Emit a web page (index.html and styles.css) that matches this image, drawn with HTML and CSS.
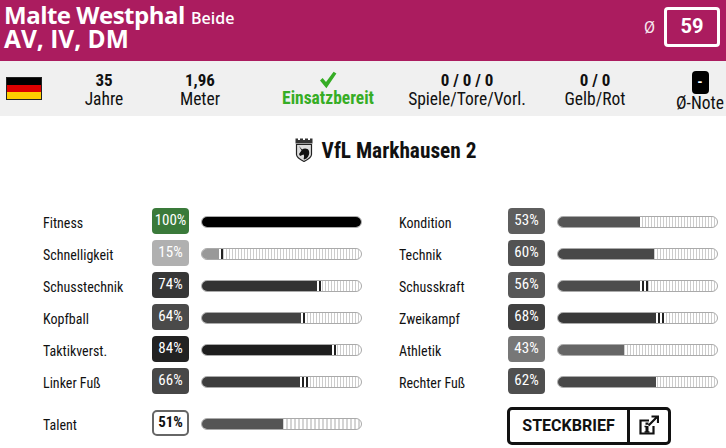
FILE: index.html
```html
<!DOCTYPE html>
<html lang="de">
<head>
    <meta charset="UTF-8">
    <title>Malte Westphal</title>
    <link rel="stylesheet" href="styles.css">
</head>
<body>
    <div class="head">
        <div class="headName">
            <div class="nameLine"><span class="nameTxt">Malte Westphal</span> <span class="foot">Beide</span></div>
            <div class="posLine">AV, IV, DM</div>
        </div>
        <div class="headScore">
            <span class="avgSign">Ø</span>
            <span class="scoreBox">59</span>
        </div>
    </div>

    <div class="stats">
        <div class="flag"><span class="flagB"></span><span class="flagR"></span><span class="flagG"></span></div>
        <div class="stat statAge"><b>35</b><span>Jahre</span></div>
        <div class="stat statSize"><b>1,96</b><span>Meter</span></div>
        <div class="stat statFit">
            <svg class="check" width="18" height="18" viewBox="0 0 18 18"><path d="M1 9.500 L3.600 7 L7 11 L14.600 0.800 L17.400 2.600 L7.400 17.200 Z" fill="#36ad25"/></svg>
            <span>Einsatzbereit</span>
        </div>
        <div class="stat statGames"><b>0 / 0 / 0</b><span>Spiele/Tore/Vorl.</span></div>
        <div class="stat statCards"><b>0 / 0</b><span>Gelb/Rot</span></div>
        <div class="stat statNote"><em class="noteBox">-</em><span>Ø-Note</span></div>
    </div>

    <div class="club">
        <svg class="crest" width="18" height="24" viewBox="0 0 18 24">
            <path d="M0.500 0.500h2.500v1.500h2v-1.500h3v1.500h2v-1.500h3v1.500h2v-1.500h2.500v5h-17z" fill="#333"/>
            <path d="M1.500 6.500h15v10c0 3-3.500 5-7.500 7c-4-2-7.500-4-7.500-7z" fill="#ddd" stroke="#222" stroke-width="1.200"/>
            <path d="M4 8l3 3.500c2-1.500 6-1.500 7 1.500c.7 2.500 0 5-2.500 7.500l-2.500 1c-1-1 1-3-.5-5l-3.500 1.500l-1-2l2.500-3.500z" fill="#111"/>
        </svg>
        <span>VfL Markhausen 2</span>
    </div>

    <div class="skills">
        <div class="skillCol">
            <div class="row"><span class="lbl">Fitness</span><span class="val" style="background:#3a7a3a">100%</span><div class="bar"><span class="fill" style="width:100%;background:#000"></span></div></div>
            <div class="row"><span class="lbl">Schnelligkeit</span><span class="val" style="background:#b0b0b0">15%</span><div class="bar"><span class="fill" style="width:17px;background:#999"></span><i class="tick"></i></div></div>
            <div class="row"><span class="lbl">Schusstechnik</span><span class="val" style="background:#373737">74%</span><div class="bar"><span class="fill" style="width:115px;background:#333"></span><i class="tick"></i></div></div>
            <div class="row"><span class="lbl">Kopfball</span><span class="val" style="background:#4a4a4a">64%</span><div class="bar"><span class="fill" style="width:99px;background:#444"></span><i class="tick"></i></div></div>
            <div class="row"><span class="lbl">Taktikverst.</span><span class="val" style="background:#222">84%</span><div class="bar"><span class="fill" style="width:130px;background:#1e1e1e"></span><i class="tick"></i></div></div>
            <div class="row"><span class="lbl">Linker Fuß</span><span class="val" style="background:#474747">66%</span><div class="bar"><span class="fill" style="width:98px;background:#3d3d3d"></span><i class="tick"></i><i class="tick"></i></div></div>
            <div class="row rowLast"><span class="lbl">Talent</span><span class="val valTalent">51%</span><div class="bar barTalent"><span class="fill" style="width:81px;background:#555"></span></div></div>
        </div>
        <div class="skillCol">
            <div class="row"><span class="lbl">Kondition</span><span class="val" style="background:#5e5e5e">53%</span><div class="bar"><span class="fill" style="width:82px;background:#555"></span></div></div>
            <div class="row"><span class="lbl">Technik</span><span class="val" style="background:#525252">60%</span><div class="bar"><span class="fill" style="width:96px;background:#484848"></span></div></div>
            <div class="row"><span class="lbl">Schusskraft</span><span class="val" style="background:#585858">56%</span><div class="bar"><span class="fill" style="width:82px;background:#4d4d4d"></span><i class="tick"></i><i class="tick"></i></div></div>
            <div class="row"><span class="lbl">Zweikampf</span><span class="val" style="background:#414141">68%</span><div class="bar"><span class="fill" style="width:98px;background:#393939"></span><i class="tick"></i><i class="tick"></i></div></div>
            <div class="row"><span class="lbl">Athletik</span><span class="val" style="background:#777">43%</span><div class="bar"><span class="fill" style="width:66px;background:#666"></span></div></div>
            <div class="row"><span class="lbl">Rechter Fuß</span><span class="val" style="background:#4f4f4f">62%</span><div class="bar"><span class="fill" style="width:98px;background:#484848"></span></div></div>
            <div class="row rowLast">
                <div class="profileBtn">
                    <span class="profileTxt">STECKBRIEF</span>
                    <span class="profileIcon">
                        <svg width="20" height="20" viewBox="0 0 20 20" fill="none" stroke="#111" stroke-width="2.200">
                            <path d="M10 5.500H1.500v13h13V11"/>
                            <path d="M9.500 10.500L18 2M12.500 1.500h6.500v6.500"/>
                            <path d="M8 7.500v2.200M8 11v6" stroke-width="3"/>
                            <path d="M5.500 17h5M5.500 11.500h2" stroke-width="1.400"/>
                        </svg>
                    </span>
                </div>
            </div>
        </div>
    </div>
</body>
</html>
```

FILE: styles.css
```css
html, body {
    margin: 0;
    padding: 0;
    overflow: hidden;
}
body {
    height: 448px;
    background: #fff;
    color: #111;
    font-family: "Roboto", "Liberation Sans", sans-serif;
}

.head {
    height: 61px;
    background: #ab1c5f;
    color: #fff;
    display: flex;
    justify-content: space-between;
    align-items: flex-start;
    padding: 0 6px 0 4px;
    box-sizing: border-box;
}
.headName {
    font-family: "Open Sans", sans-serif;
    font-weight: 700;
    font-size: 24px;
    padding-top: 3px;
}
.nameLine {
    height: 24px;
    line-height: 24px;
}
.posLine {
    font-size: 24.500px;
    line-height: 24px;
}
.nameTxt {
    letter-spacing: -.5px;
}
.foot {
    font-size: 16px;
    font-weight: 600;
}
.headScore {
    display: flex;
    align-items: center;
    padding-top: 7px;
}
.avgSign {
    font-size: 16px;
    margin-right: 9px;
    opacity: .9;
}
.scoreBox {
    width: 56px;
    height: 40px;
    box-sizing: border-box;
    border: 3px solid #fff;
    border-radius: 4px;
    text-align: center;
    font-size: 20px;
    font-weight: 700;
    line-height: 33px;
}

.stats {
    height: 55px;
    background: #f0f0f0;
    display: flex;
}
.flag {
    width: 34px;
    height: 21px;
    margin: 16px 0 0 6px;
    border: 1px solid #222;
    display: flex;
    flex-direction: column;
}
.flag span { flex: 1; }
.flagB { background: #000; }
.flagR { background: #dd0000; }
.flagG { background: #ffce00; }

.stat {
    display: flex;
    flex-direction: column;
    align-items: center;
    font-size: 17.500px;
    font-stretch: 75%;
    line-height: 19px;
    padding-top: 10px;
    white-space: nowrap;
}
.stat b {
    font-size: 17px;
    font-weight: 700;
}
.statAge { width: 60px; margin-left: 32px; }
.statSize { width: 60px; margin-left: 36px; }
.statFit {
    width: 100px;
    margin-left: 48px;
    color: #36ad25;
    font-weight: 700;
}
.statGames { width: 130px; margin-left: 24px; }
.statCards { width: 60px; margin-left: 33px; }
.statNote { width: 50px; margin-left: 50px; }
.noteBox {
    width: 17px;
    height: 23px;
    background: #000;
    border-radius: 4px;
    color: #fff;
    font-style: normal;
    font-weight: 700;
    font-size: 15px;
    line-height: 22px;
    text-align: center;
}

.club {
    display: flex;
    justify-content: center;
    align-items: center;
    gap: 9px;
    height: 26px;
    margin-top: 21px;
    padding-left: 45px;
    font-size: 21.300px;
    font-stretch: 75%;
    font-weight: 700;
}

.skills {
    display: flex;
    margin-top: 45px;
}
.skillCol {
    width: 362px;
    padding-left: 43px;
    box-sizing: border-box;
    flex: none;
}
.skillCol + .skillCol { padding-left: 37px; width: 364px; }
.row {
    display: flex;
    align-items: center;
    height: 26px;
    margin-bottom: 6px;
    font-stretch: 75%;
}
.rowLast { margin-top: 16px; }
.lbl {
    flex: none;
    width: 109px;
    font-size: 14px;
    padding-top: 4px;
}
.val {
    flex: none;
    width: 37px;
    height: 26px;
    border-radius: 4px;
    color: #fff;
    font-size: 15px;
    line-height: 24px;
    text-align: center;
    box-sizing: border-box;
}
.valTalent {
    background: #fff;
    color: #111;
    font-weight: 700;
    border: 2px solid #666;
    border-radius: 5px;
    line-height: 21px;
}
.bar {
    flex: none;
    width: 161px;
    height: 12px;
    margin: 2px 0 0 12px;
    box-sizing: border-box;
    border: 1px solid #aaa;
    border-radius: 6px;
    overflow: hidden;
    display: flex;
    background: repeating-linear-gradient(90deg, #ccc 0, #ccc 1px, #fff 1px, #fff 3px);
}
.barTalent {
    background: repeating-linear-gradient(90deg, #d4d4d4 0, #d4d4d4 2px, #fff 2px, #fff 4px);
}
.fill {
    display: block;
    height: 100%;
}
.tick {
    display: block;
    width: 2px;
    height: 100%;
    background: #222;
    border-left: 2px solid #fff;
}

.profileBtn {
    flex: none;
    display: flex;
    height: 38px;
    width: 164px;
    margin: 6px 0 0 108px;
    box-sizing: border-box;
    border: 3px solid #111;
    border-radius: 5px;
    font-stretch: 100%;
}
.profileTxt {
    width: 120px;
    box-sizing: border-box;
    border-right: 3px solid #111;
    font-weight: 700;
    font-size: 16px;
    line-height: 32px;
    text-align: center;
}
.profileIcon {
    flex: 1;
    display: flex;
    align-items: center;
    justify-content: center;
    padding-bottom: 2px;
}
```
